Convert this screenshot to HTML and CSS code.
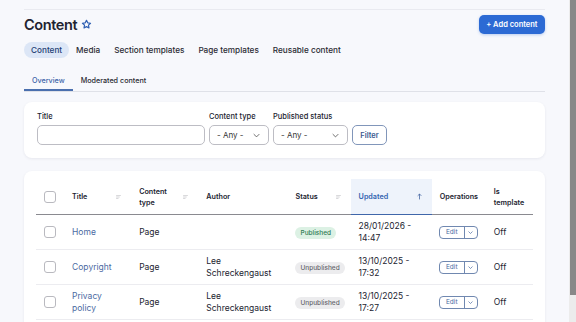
FILE: index.html
```html
<!DOCTYPE html>
<html lang="en">
<head>
<meta charset="utf-8">
<title>Content</title>
<link rel="stylesheet" href="styles.css">
</head>
<body>
<div class="page">
  <div class="topline"></div>
  <div class="header">
    <h1 class="title">Content
      <svg class="star" viewBox="0 0 24 24" width="11" height="11"><path d="M12 2.8l2.7 5.6 6.1.8-4.5 4.2 1.1 6.1L12 16.6l-5.4 2.9 1.1-6.1-4.5-4.2 6.1-.8z" fill="none" stroke="#2f5fb3" stroke-width="2.6" stroke-linejoin="round"/></svg>
    </h1>
    <a class="btn-primary">+ Add content</a>
  </div>
  <nav class="tabs">
    <span class="tab active">Content</span>
    <span class="tab">Media</span>
    <span class="tab">Section templates</span>
    <span class="tab">Page templates</span>
    <span class="tab">Reusable content</span>
  </nav>
  <nav class="subtabs">
    <span class="subtab active">Overview</span>
    <span class="subtab">Moderated content</span>
  </nav>
  <section class="card filters">
    <div class="field">
      <label class="label">Title</label>
      <div class="input input-title"></div>
    </div>
    <div class="field">
      <label class="label">Content type</label>
      <div class="input select sel-type"><span>- Any -</span><svg viewBox="0 0 10 6" width="7" height="5"><path d="M1 1l4 4 4-4" fill="none" stroke="#555" stroke-width="1.2"/></svg></div>
    </div>
    <div class="field">
      <label class="label">Published status</label>
      <div class="input select sel-status"><span>- Any -</span><svg viewBox="0 0 10 6" width="7" height="5"><path d="M1 1l4 4 4-4" fill="none" stroke="#555" stroke-width="1.2"/></svg></div>
    </div>
    <div class="field">
      <button class="btn-filter">Filter</button>
    </div>
  </section>
  <section class="card tablecard">
    <table class="content-table">
      <colgroup>
        <col class="c-check"><col class="c-title"><col class="c-type"><col class="c-author"><col class="c-status"><col class="c-updated"><col class="c-ops"><col class="c-tpl">
      </colgroup>
      <thead>
        <tr>
          <th><span class="checkbox"></span></th>
          <th><div class="th-in">Title<svg class="sort" viewBox="0 0 6 5" width="5" height="4"><path d="M0 .5h6M0 2.5h4.5M0 4.5h3" stroke="#c4c4c8" stroke-width=".9"/></svg></div></th>
          <th><div class="th-in">Content<br>type<svg class="sort" viewBox="0 0 6 5" width="5" height="4"><path d="M0 .5h6M0 2.5h4.5M0 4.5h3" stroke="#c4c4c8" stroke-width=".9"/></svg></div></th>
          <th>Author</th>
          <th><div class="th-in">Status<svg class="sort" viewBox="0 0 6 5" width="5" height="4"><path d="M0 .5h6M0 2.5h4.5M0 4.5h3" stroke="#c4c4c8" stroke-width=".9"/></svg></div></th>
          <th class="sorted"><div class="th-in">Updated<svg class="arrow" viewBox="0 0 6 8" width="5" height="7"><path d="M3 7.5V1M.8 3.2L3 1l2.2 2.2" fill="none" stroke="#3c5f9e" stroke-width=".9"/></svg></div></th>
          <th>Operations</th>
          <th>Is<br>template</th>
        </tr>
      </thead>
      <tbody>
        <tr>
          <td><span class="checkbox"></span></td>
          <td><a class="link">Home</a></td>
          <td>Page</td>
          <td></td>
          <td><span class="badge published">Published</span></td>
          <td class="upd">28/01/2026 - 14:47</td>
          <td class="ops-cell"><span class="ops"><span class="ops-edit">Edit</span><span class="ops-more"><svg viewBox="0 0 10 6" width="5" height="3"><path d="M1 1l4 4 4-4" fill="none" stroke="#4b6aa2" stroke-width="1.4"/></svg></span></span></td>
          <td>Off</td>
        </tr>
        <tr>
          <td><span class="checkbox"></span></td>
          <td><a class="link">Copyright</a></td>
          <td>Page</td>
          <td>Lee Schreckengaust</td>
          <td><span class="badge unpublished">Unpublished</span></td>
          <td class="upd">13/10/2025 - 17:32</td>
          <td class="ops-cell"><span class="ops"><span class="ops-edit">Edit</span><span class="ops-more"><svg viewBox="0 0 10 6" width="5" height="3"><path d="M1 1l4 4 4-4" fill="none" stroke="#4b6aa2" stroke-width="1.4"/></svg></span></span></td>
          <td>Off</td>
        </tr>
        <tr>
          <td><span class="checkbox"></span></td>
          <td><a class="link">Privacy policy</a></td>
          <td>Page</td>
          <td>Lee Schreckengaust</td>
          <td><span class="badge unpublished">Unpublished</span></td>
          <td class="upd">13/10/2025 - 17:27</td>
          <td class="ops-cell"><span class="ops"><span class="ops-edit">Edit</span><span class="ops-more"><svg viewBox="0 0 10 6" width="5" height="3"><path d="M1 1l4 4 4-4" fill="none" stroke="#4b6aa2" stroke-width="1.4"/></svg></span></span></td>
          <td>Off</td>
        </tr>
      </tbody>
    </table>
  </section>
</div>
<div class="scrollbar"><div class="thumb"></div></div>
</body>
</html>
```
FILE: styles.css
```css
html, body {
  margin: 0;
  height: 100%;
  overflow: hidden;
}
body {
  background: #f7f8fc;
  font-family: Inter, "Noto Sans", sans-serif;
  color: #222330;
}
.page {
  padding: 0 31px 0 24px;
}
.topline {
  height: 9px;
  border-bottom: 1px solid #e9eaf0;
}
.header {
  display: flex;
  justify-content: space-between;
  align-items: center;
  margin-top: 5px;
  height: 19px;
}
.title {
  margin: 0;
  font-size: 14.5px;
  font-weight: 600;
  letter-spacing: -0.4px;
  display: flex;
  align-items: center;
  gap: 4px;
}
.btn-primary {
  display: flex;
  align-items: center;
  height: 19px;
  padding: 0 7.5px;
  background: #2c6ad4;
  color: #fff;
  font-size: 7.5px;
  font-weight: 600;
  border-radius: 5px;
  box-shadow: 0 1px 3px rgba(44, 106, 212, 0.3);
}
.tabs {
  display: flex;
  margin-top: 8px;
}
.tab {
  height: 16px;
  display: flex;
  align-items: center;
  padding: 0 7px;
  font-size: 8.2px;
  font-weight: 500;
  color: #2a2b33;
  border-radius: 8px;
}
.tab.active {
  background: #dce6f6;
  color: #1f3f74;
}
.subtabs {
  display: flex;
  margin-top: 12px;
  border-bottom: 1px solid #dfe1e8;
}
.subtab {
  height: 21px;
  display: flex;
  align-items: center;
  padding: 0 8px;
  font-size: 7.2px;
  font-weight: 500;
  color: #2a2b33;
  box-sizing: border-box;
}
.subtab.active {
  color: #3a62a8;
  border-bottom: 2px solid #4a6fae;
  margin-bottom: -1px;
  padding-top: 2px;
}
.card {
  background: #fff;
  border-radius: 8px;
  box-shadow: 0 1px 3px rgba(20, 20, 60, 0.07);
}
.filters {
  margin-top: 10px;
  padding: 10px 13px 13px;
  display: flex;
  align-items: flex-end;
  gap: 4px;
}
.field {
  display: flex;
  flex-direction: column;
  gap: 3px;
}
.label {
  font-size: 7.5px;
  font-weight: 500;
  line-height: 10px;
  color: #222330;
}
.input {
  height: 20px;
  box-sizing: border-box;
  border: 1px solid #bdbdc4;
  border-radius: 5px;
  background: #fff;
}
.input-title { width: 168px; }
.select {
  display: flex;
  align-items: center;
  justify-content: space-between;
  padding: 0 8px 0 7px;
  font-size: 8px;
  color: #333;
}
.sel-type { width: 60px; }
.sel-status { width: 75px; }
.btn-filter {
  width: 35px;
  height: 20px;
  border: 1.5px solid #8196ba;
  border-radius: 5px;
  background: #fff;
  color: #3a5a90;
  font-family: inherit;
  font-size: 7.5px;
  font-weight: 600;
  padding: 0;
}
.tablecard {
  margin-top: 13px;
  padding: 8px 12px 20px;
}
.content-table {
  width: 100%;
  border-collapse: collapse;
  table-layout: fixed;
}
.c-check { width: 28px; }
.c-title { width: 67px; }
.c-type { width: 67px; }
.c-author { width: 89px; }
.c-status { width: 63px; }
.c-updated { width: 81px; }
.c-ops { width: 54px; }
.c-tpl { width: 47px; }
th {
  height: 35px;
  padding: 0 8px;
  text-align: left;
  font-size: 7.2px;
  font-weight: 600;
  line-height: 11px;
  color: #222330;
  border-bottom: 1.5px solid #8a8a90;
}
th:first-child, td:first-child {
  padding: 0 0 0 8px;
}
.th-in {
  display: flex;
  align-items: center;
  justify-content: space-between;
  padding-right: 2px;
}
th.sorted {
  background: #eef3fb;
  color: #3463b0;
  border-bottom-color: #3f66aa;
}
td {
  height: 34px;
  padding: 0 8px;
  font-size: 8.5px;
  line-height: 12px;
  color: #222330;
  border-bottom: 1px solid #ececf0;
  vertical-align: middle;
}
td.ops-cell {
  padding-left: 7px;
}
.checkbox {
  display: block;
  width: 12px;
  height: 12px;
  box-sizing: border-box;
  border: 1px solid #b9b9bf;
  border-radius: 3px;
  background: #fff;
}
.link {
  color: #4b6aa2;
}
.badge {
  display: inline-block;
  font-size: 6.5px;
  font-weight: 500;
  line-height: 12px;
  padding: 0 5px;
  border-radius: 6px;
}
.published {
  background: #dcf1e4;
  color: #2f7b52;
}
.unpublished {
  background: #ececee;
  color: #66666c;
}
.ops {
  display: inline-flex;
  height: 13px;
  box-sizing: border-box;
  border: 1px solid #7088b0;
  border-radius: 4px;
  vertical-align: middle;
}
.ops-edit {
  width: 24px;
  display: flex;
  align-items: center;
  justify-content: center;
  font-size: 6.5px;
  color: #4b6aa2;
  border-right: 1px solid #7088b0;
}
.ops-more {
  width: 12px;
  display: flex;
  align-items: center;
  justify-content: center;
}
.scrollbar {
  position: fixed;
  top: 0;
  right: 0;
  width: 7px;
  height: 100%;
  background: #ececec;
}
.thumb {
  margin-left: 1px;
  width: 6px;
  height: 295px;
  background: #888;
}
```
